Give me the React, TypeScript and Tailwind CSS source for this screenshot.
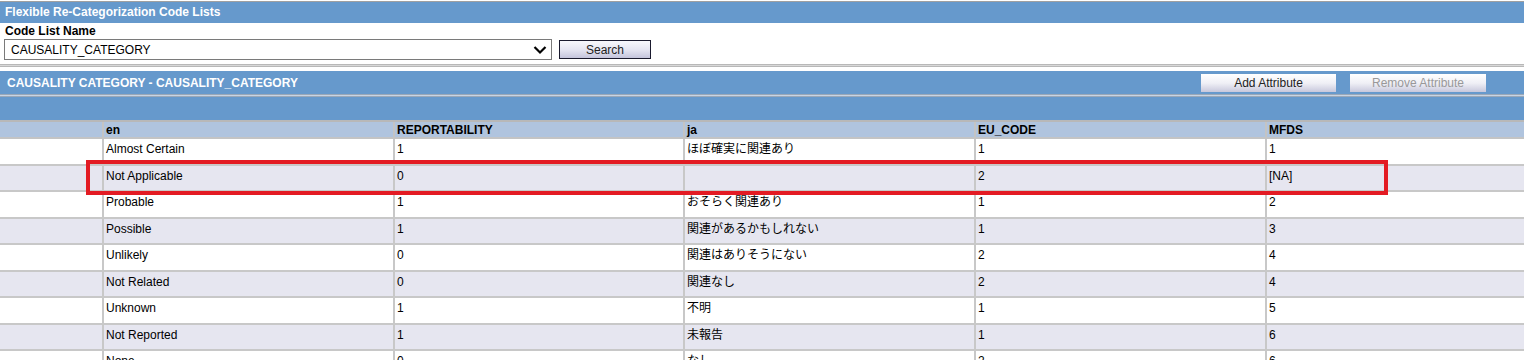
const rows: [string, string, string, string, string][] = [
  ['Almost Certain', '1', 'ほぼ確実に関連あり', '1', '1'],
  ['Not Applicable', '0', '', '2', '[NA]'],
  ['Probable', '1', 'おそらく関連あり', '1', '2'],
  ['Possible', '1', '関連があるかもしれない', '1', '3'],
  ['Unlikely', '0', '関連はありそうにない', '2', '4'],
  ['Not Related', '0', '関連なし', '2', '4'],
  ['Unknown', '1', '不明', '1', '5'],
  ['Not Reported', '1', '未報告', '1', '6'],
  ['None', '0', 'なし', '2', '6'],
];

const cols = 'grid grid-cols-[104px_291px_290px_291px_291px_1fr]';

export default function App() {
  return (
    <div
      className="relative w-[1524px] h-[360px] overflow-hidden bg-white text-[12px] text-black"
      style={{ fontFamily: '"Liberation Sans", Arial, "Noto Sans CJK JP", sans-serif' }}
    >
      {/* Search section */}
      <div className="border-t border-[#a0a0a0] mt-px">
        <div className="h-[21px] bg-[#6699cc] text-white font-bold px-[5px] leading-[21px]">
          Flexible Re-Categorization Code Lists
        </div>
      </div>
      <div className="px-[5px] pt-[1px] font-bold leading-[14px]">Code List Name</div>
      <div className="flex items-center gap-[7px] pl-[4px] mt-[1px]">
        <div className="w-[548px] h-[21px] border border-[#7a7a7a] flex items-center justify-between pl-[6px] pr-[4px]">
          <span>CAUSALITY_CATEGORY</span>
          <svg width="14" height="10" viewBox="0 0 14 10">
            <polyline points="1.5,2 7,7.5 12.5,2" fill="none" stroke="#000" strokeWidth="2.2" />
          </svg>
        </div>
        <button className="w-[92px] h-[19px] border border-[#1a1a2e] bg-gradient-to-b from-[#f8f8fc] via-[#e6e6f2] to-[#c4c4dc] text-[#222] leading-[16px] text-center">
          Search
        </button>
      </div>
      <div className="mt-[4px] h-[3px] border-y border-[#b8b8b8] bg-[#d8d8d8]" />

      {/* Code list section */}
      <div className="mt-[4px] h-[23px] bg-[#6699cc] flex items-center justify-between pl-[7px] pr-[38px]">
        <span className="text-white font-bold">CAUSALITY CATEGORY - CAUSALITY_CATEGORY</span>
        <div className="flex gap-[14px]">
          <button className="w-[135px] h-[18px] bg-gradient-to-b from-white via-[#f0f0f6] to-[#c8c8dc] text-[#222] leading-[18px] text-center">
            Add Attribute
          </button>
          <button className="w-[136px] h-[18px] bg-gradient-to-b from-white via-[#f0f0f6] to-[#c8c8dc] text-[#999] leading-[18px] text-center">
            Remove Attribute
          </button>
        </div>
      </div>
      <div className="h-[3px] bg-[#c8d4e4] border-y border-[#9aa8b8]" />
      <div className="h-[23px] bg-[#6699cc]" />
      <div className="h-[2px] bg-[#b8b8b8]" />

      {/* Table */}
      <div className={`${cols} h-[17px] bg-[#b0c4de] font-bold border-b-2 border-[#c4c4c4]`}>
        <div className="border-r-2 border-[#c4c4c4]" />
        {['en', 'REPORTABILITY', 'ja', 'EU_CODE', 'MFDS'].map((h, i) => (
          <div key={h} className={`px-[2px] leading-[17px] ${i < 4 ? 'border-r-2 border-[#c4c4c4]' : ''}`}>
            {h}
          </div>
        ))}
      </div>
      {rows.map((r, ri) => (
        <div
          key={ri}
          className={`${cols} h-[26.5px] border-b-2 border-[#c8c8c8] ${ri % 2 === 1 ? 'bg-[#e6e6f0]' : 'bg-white'}`}
        >
          <div className="border-r-2 border-[#c8c8c8]" />
          {r.map((c, i) => (
            <div
              key={i}
              className={`px-[2px] pt-[2px] leading-[16px] whitespace-nowrap ${i < 4 ? 'border-r-2 border-[#c8c8c8]' : ''}`}
            >
              {c}
            </div>
          ))}
        </div>
      ))}

      {/* highlight */}
      <div className="absolute left-[86px] top-[160px] w-[1302px] h-[35px] border-4 border-[#e31b23] pointer-events-none" />
    </div>
  );
}
